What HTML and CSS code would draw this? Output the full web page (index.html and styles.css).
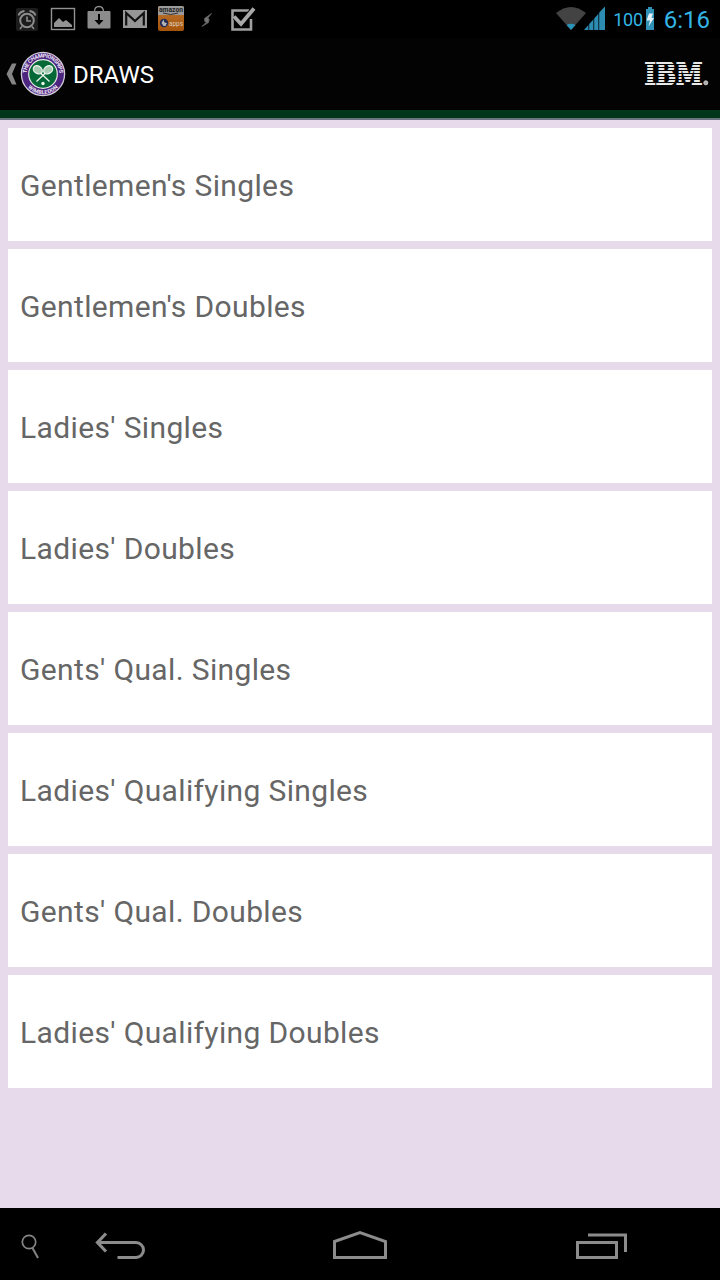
FILE: index.html
```html
<!DOCTYPE html>
<html lang="en">
<head>
    <meta charset="UTF-8">
    <meta name="viewport" content="width=device-width, initial-scale=1.0">
    <title>Draws</title>
    <link rel="stylesheet" href="styles.css">
</head>
<body>
    <div class="status-bar">
        <div class="notifications">
            <!-- alarm -->
            <svg width="22" height="24" viewBox="0 0 22 24">
                <rect width="22" height="23" rx="2" fill="#1c1c1c"/>
                <circle cx="11" cy="12.500" r="6.800" fill="none" stroke="#8c8c8c" stroke-width="2"/>
                <path d="M11 8.500v4.500h4M6 18.500l-2 2.500M16 18.500l2 2.500" fill="none" stroke="#8c8c8c" stroke-width="1.600"/>
                <path d="M2.500 7.500Q4 3.500 8.500 3M19.500 7.500Q18 3.500 13.500 3" fill="none" stroke="#8c8c8c" stroke-width="2"/>
            </svg>
            <!-- gallery -->
            <svg width="24" height="24" viewBox="0 0 24 24">
                <rect x=".5" y=".5" width="23" height="21" fill="none" stroke="#929292" stroke-width="1.400"/>
                <path d="M3 19v-4l5-5 4 4 3-2 6 5v2z" fill="#929292"/>
            </svg>
            <!-- market -->
            <svg width="24" height="24" viewBox="0 0 24 24">
                <path d="M7.500 4Q7.500-1.500 12-1.500T16.500 4" fill="none" stroke="#8c8c8c" stroke-width="1.300"/>
                <rect x=".5" y="3" width="23" height="17.500" rx="1" fill="#8c8c8c"/>
                <path d="M11 6h2v6h3.500L12 17 7.500 12H11z" fill="#000"/>
            </svg>
            <!-- mail -->
            <svg width="24" height="24" viewBox="0 0 24 24">
                <rect y="2" width="24" height="18" fill="#969696"/>
                <path d="M3.200 17.500V5L12 13l8.800-8V17.500" fill="none" stroke="#111" stroke-width="2.200"/>
            </svg>
            <!-- app store -->
            <svg width="26" height="26" viewBox="0 0 26 26">
                <defs>
                    <linearGradient id="store" x1="0" y1="0" x2="0" y2="1">
                        <stop offset="0" stop-color="#bd7630"/>
                        <stop offset="1" stop-color="#a7540b"/>
                    </linearGradient>
                </defs>
                <rect width="26" height="25" rx="2" fill="url(#store)"/>
                <path d="M0 9V2Q0 0 2 0h22q2 0 2 2v7z" fill="#9a9a9a"/>
                <text class="store-brand" x="1" y="6" textLength="24" lengthAdjust="spacingAndGlyphs">amazon</text>
                <path d="M5 7Q13 10 20 7" fill="none" stroke="#333" stroke-width="1"/>
                <circle cx="6" cy="17" r="4.200" fill="#202b58"/>
                <path d="M3.500 17l2-3.500 1 3 2.500.5-1.500 3H5.500z" fill="#b5b5b5"/>
                <text class="store-apps" x="11" y="19.500" textLength="14" lengthAdjust="spacingAndGlyphs">apps</text>
            </svg>
            <!-- charge -->
            <svg width="24" height="24" viewBox="0 0 24 24">
                <path d="M16.500 5.500L9.500 10.500l.3 3 1.700.5L7 18.500l6.500-4 .6-3.500-1.600-.5z" fill="#777" stroke="#666" stroke-width=".8"/>
            </svg>
            <!-- task done -->
            <svg width="26" height="26" viewBox="0 0 26 26">
                <path d="M18 4.500H1.500V23.500H20V13" fill="none" stroke="#a0a0a0" stroke-width="2.600"/>
                <path d="M4 11l6 6.500L23 3" fill="none" stroke="#000" stroke-width="6"/>
                <path d="M3 10.500l7 7.500L23 2.500" fill="none" stroke="#a8a8a8" stroke-width="3.800"/>
            </svg>
        </div>
        <div class="system">
            <!-- wifi -->
            <svg width="30" height="24" viewBox="0 0 30 24">
                <path d="M0 6Q15-6 30 6L15 23z" fill="#434343"/>
                <path d="M10.500 18Q15 15.500 19.500 18L15 23z" fill="#2c93b8"/>
            </svg>
            <!-- signal -->
            <svg class="signal" width="22" height="24" viewBox="0 0 22 24">
                <path d="M0 23l4-4.500V23zM5.300 17L9 13v10H5.300zM10.300 11.500l3.700-4.300V23h-3.700zM15.300 5.500L21-.5V23h-5.700z" fill="#2c8db2"/>
                <path d="M4 18.500L21-.5V23H4z" fill="#2c8db2" opacity=".4"/>
            </svg>
            <span class="level">100</span>
            <!-- battery -->
            <svg class="battery" width="8" height="24" viewBox="0 0 8 24">
                <path d="M2 0h4v2h2v21H0V2h2z" fill="#3192b7"/>
                <path d="M3 6.500h4L5.500 11H8l-5.500 8.500L4 13.500H.5z" fill="#e4f2f7"/>
            </svg>
            <span class="clock">6:16</span>
        </div>
    </div>

    <div class="action-bar">
        <svg class="up" width="13" height="24" viewBox="0 0 13 24">
            <path d="M7 1.500H11.500L7 12l4.500 10.500H7L1.500 12z" fill="#858585"/>
        </svg>
        <svg class="crest" width="46" height="46" viewBox="0 0 46 46">
            <defs>
                <path id="crest-top" d="M6.500 23A16.500 16.500 0 0 1 39.500 23"/>
                <path id="crest-bottom" d="M2.800 23A20.200 20.200 0 0 0 43.200 23"/>
            </defs>
            <circle cx="23" cy="23" r="21.600" fill="#4b2580" stroke="#d2cad8" stroke-width="1.300"/>
            <circle cx="23" cy="23" r="14.300" fill="#046937" stroke="#e5e8e4" stroke-width="1.200"/>
            <text class="crest-text"><textPath href="#crest-top" startOffset="50%" textLength="50">THE CHAMPIONSHIPS</textPath></text>
            <text class="crest-text"><textPath href="#crest-bottom" startOffset="50%" textLength="34">WIMBLEDON</textPath></text>
            <g stroke="#eef5ef" stroke-width="1.300">
                <path d="M19 20.500l10.500 10M27 20.500l-10.500 10"/>
                <ellipse cx="17.800" cy="18.800" rx="4.800" ry="3.700" transform="rotate(35 17.800 18.800)" fill="#a7cbb3"/>
                <ellipse cx="28.200" cy="18.800" rx="4.800" ry="3.700" transform="rotate(-35 28.200 18.800)" fill="#a7cbb3"/>
            </g>
            <circle cx="23" cy="32.500" r="1.700" fill="#eef5ef"/>
        </svg>
        <h1 class="title">DRAWS</h1>
        <svg class="sponsor" width="66" height="26" viewBox="0 0 66 26">
            <text class="sponsor-name" x="-.5" y="24" textLength="58" lengthAdjust="spacingAndGlyphs">IBM</text>
            <path d="M-2 .5h62M-2 3.500h62M-2 6.500h62M-2 9.500h62M-2 12.500h62M-2 15.500h62M-2 18.500h62M-2 21.500h62M-2 24.500h62" stroke="#030303" stroke-width="1"/>
            <circle cx="60.800" cy="21.800" r="2" fill="#aaa" stroke="#ccc" stroke-width="1"/>
        </svg>
    </div>

    <ul class="draws">
        <li class="draw">Gentlemen's Singles</li>
        <li class="draw">Gentlemen's Doubles</li>
        <li class="draw">Ladies' Singles</li>
        <li class="draw">Ladies' Doubles</li>
        <li class="draw">Gents' Qual. Singles</li>
        <li class="draw">Ladies' Qualifying Singles</li>
        <li class="draw">Gents' Qual. Doubles</li>
        <li class="draw">Ladies' Qualifying Doubles</li>
    </ul>

    <div class="nav-bar">
        <svg class="search" width="20" height="26" viewBox="0 0 20 26">
            <circle cx="8" cy="8" r="6.700" fill="none" stroke="#858585" stroke-width="1.700"/>
            <path d="M11.500 14L17 24" stroke="#858585" stroke-width="2"/>
        </svg>
        <svg class="back" width="50" height="28" viewBox="0 0 50 28">
            <path d="M2.500 9.500H41a7.500 7.500 0 0 1 0 15H22.500" fill="none" stroke="#8c8c8c" stroke-width="3"/>
            <path d="M11 .5L2.500 9.500l8.500 9" fill="none" stroke="#8c8c8c" stroke-width="3.200"/>
        </svg>
        <svg class="home" width="54" height="30" viewBox="0 0 54 30">
            <path d="M1.500 11.500L27 2.500l25.500 9v16h-51z" fill="none" stroke="#8c8c8c" stroke-width="3"/>
        </svg>
        <svg class="recent" width="52" height="28" viewBox="0 0 52 28">
            <path d="M1.500 9.500h39v15h-39zM12 2h37.500v17" fill="none" stroke="#8c8c8c" stroke-width="3"/>
        </svg>
    </div>
</body>
</html>
```
FILE: styles.css
```css
* {
    box-sizing: border-box;
}

body {
    margin: 0;
    height: 1280px;
    display: flex;
    flex-direction: column;
    background-color: #e6daeb;
    font-family: Roboto, "Liberation Sans", sans-serif;
    overflow: hidden;
}

svg {
    display: block;
    flex: none;
    overflow: visible;
}

.status-bar {
    height: 38px;
    display: flex;
    justify-content: space-between;
    background-color: #000;
    color: #33b5e5;
}

.notifications {
    display: flex;
    align-items: flex-start;
    gap: 12px;
    padding: 8px 0 0 16px;
}

.notifications svg:nth-child(2) {
    margin-left: 1px;
}

.notifications svg:nth-child(5) {
    margin: -2px -1px 0;
}

.notifications svg:nth-child(7) {
    margin-top: -2px;
}

.store-brand {
    font-size: 7px;
    font-weight: bold;
    fill: #222;
}

.store-apps {
    font-size: 8px;
    fill: #d9cdbd;
}

.system {
    display: flex;
    align-items: flex-start;
    padding: 7px 10px 0 0;
}

.signal {
    margin-left: -2px;
}

.level {
    margin-left: 7px;
    font-size: 18px;
    line-height: 26px;
    letter-spacing: -0.3px;
}

.battery {
    margin-left: 3px;
}

.clock {
    margin-left: 10px;
    font-size: 24px;
    line-height: 26px;
}

.action-bar {
    height: 82px;
    display: flex;
    align-items: center;
    padding: 0 12px 8px 5px;
    background-color: #030303;
    border-bottom: 2px solid #6b7580;
    box-shadow: inset 0 -8px #00361b;
}

.crest {
    margin-left: 2px;
}

.crest-text {
    font-size: 5.5px;
    font-weight: bold;
    fill: #f0eaf5;
    text-anchor: middle;
}

.title {
    margin: 2px 0 0 7px;
    color: #fff;
    font-size: 24px;
    font-weight: normal;
    line-height: 28px;
}

.sponsor {
    margin-left: auto;
    margin-right: -3px;
}

.sponsor-name {
    font-family: "DejaVu Serif", serif;
    font-size: 31px;
    font-weight: bold;
    fill: #e8e8e8;
    stroke: #e8e8e8;
    stroke-width: 1.4px;
}

.draws {
    flex: 1;
    display: flex;
    flex-direction: column;
    gap: 8px;
    margin: 0;
    padding: 8px;
    list-style: none;
}

.draw {
    height: 113px;
    padding: 2px 12px 0;
    background-color: #fff;
    color: #666;
    font-size: 30px;
    line-height: 112px;
    letter-spacing: 0.36px;
}

.nav-bar {
    height: 72px;
    display: flex;
    align-items: flex-start;
    padding-top: 25px;
    background-color: #000;
}

.search {
    margin: 1px 0 0 21px;
}

.back {
    margin-left: 54px;
}

.home {
    margin: -3px 0 0 188px;
}

.recent {
    margin-left: 189px;
}
```
